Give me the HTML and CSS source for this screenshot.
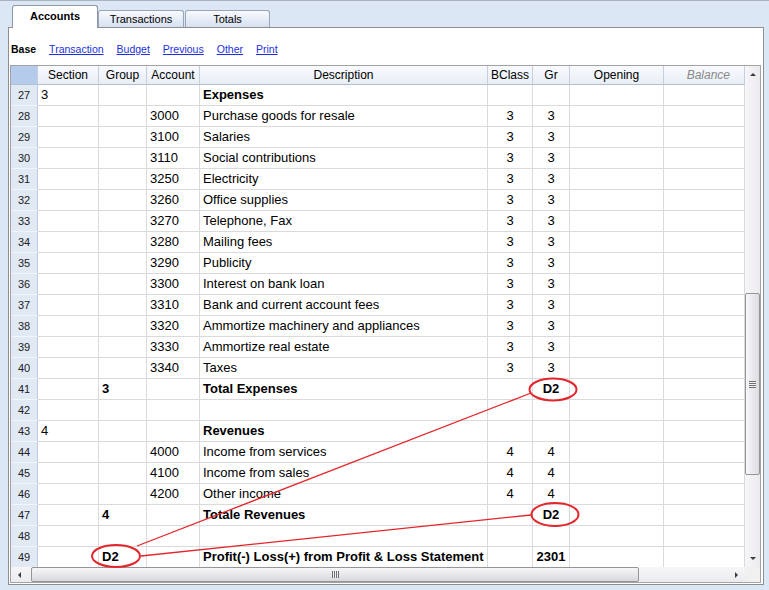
FILE: index.html
```html
<!DOCTYPE html>
<html lang="en">
<head>
    <meta charset="UTF-8">
    <title>Accounts</title>
    <link rel="stylesheet" href="styles.css">
</head>
<body>
    <div class="tabs">
        <div class="tab active">Accounts</div>
        <div class="tab">Transactions</div>
        <div class="tab tab-last">Totals</div>
    </div>
    <div class="panel">
        <div class="views">
            <b>Base</b>
            <a href="#">Transaction</a>
            <a href="#">Budget</a>
            <a href="#">Previous</a>
            <a href="#">Other</a>
            <a href="#">Print</a>
        </div>
        <div class="grid">
            <div class="grid-main">
                <div class="sheet">
                    <div class="row head">
                        <span class="corner"></span><span>Section</span><span>Group</span><span>Account</span><span>Description</span><span>BClass</span><span>Gr</span><span>Opening</span><span class="bal">Balance</span>
                    </div>
                    <div class="row"><span class="num">27</span><span>3</span><span></span><span></span><span class="b">Expenses</span><span></span><span></span><span></span><span></span></div>
                    <div class="row"><span class="num">28</span><span></span><span></span><span>3000</span><span>Purchase goods for resale</span><span class="c">3</span><span class="c">3</span><span></span><span></span></div>
                    <div class="row"><span class="num">29</span><span></span><span></span><span>3100</span><span>Salaries</span><span class="c">3</span><span class="c">3</span><span></span><span></span></div>
                    <div class="row"><span class="num">30</span><span></span><span></span><span>3110</span><span>Social contributions</span><span class="c">3</span><span class="c">3</span><span></span><span></span></div>
                    <div class="row"><span class="num">31</span><span></span><span></span><span>3250</span><span>Electricity</span><span class="c">3</span><span class="c">3</span><span></span><span></span></div>
                    <div class="row"><span class="num">32</span><span></span><span></span><span>3260</span><span>Office supplies</span><span class="c">3</span><span class="c">3</span><span></span><span></span></div>
                    <div class="row"><span class="num">33</span><span></span><span></span><span>3270</span><span>Telephone, Fax</span><span class="c">3</span><span class="c">3</span><span></span><span></span></div>
                    <div class="row"><span class="num">34</span><span></span><span></span><span>3280</span><span>Mailing fees</span><span class="c">3</span><span class="c">3</span><span></span><span></span></div>
                    <div class="row"><span class="num">35</span><span></span><span></span><span>3290</span><span>Publicity</span><span class="c">3</span><span class="c">3</span><span></span><span></span></div>
                    <div class="row"><span class="num">36</span><span></span><span></span><span>3300</span><span>Interest on bank loan</span><span class="c">3</span><span class="c">3</span><span></span><span></span></div>
                    <div class="row"><span class="num">37</span><span></span><span></span><span>3310</span><span>Bank and current account fees</span><span class="c">3</span><span class="c">3</span><span></span><span></span></div>
                    <div class="row"><span class="num">38</span><span></span><span></span><span>3320</span><span>Ammortize machinery and appliances</span><span class="c">3</span><span class="c">3</span><span></span><span></span></div>
                    <div class="row"><span class="num">39</span><span></span><span></span><span>3330</span><span>Ammortize real estate</span><span class="c">3</span><span class="c">3</span><span></span><span></span></div>
                    <div class="row"><span class="num">40</span><span></span><span></span><span>3340</span><span>Taxes</span><span class="c">3</span><span class="c">3</span><span></span><span></span></div>
                    <div class="row"><span class="num">41</span><span></span><span class="b">3</span><span></span><span class="b">Total Expenses</span><span></span><span class="c b">D2</span><span></span><span></span></div>
                    <div class="row"><span class="num">42</span><span></span><span></span><span></span><span></span><span></span><span></span><span></span><span></span></div>
                    <div class="row"><span class="num">43</span><span>4</span><span></span><span></span><span class="b">Revenues</span><span></span><span></span><span></span><span></span></div>
                    <div class="row"><span class="num">44</span><span></span><span></span><span>4000</span><span>Income from services</span><span class="c">4</span><span class="c">4</span><span></span><span></span></div>
                    <div class="row"><span class="num">45</span><span></span><span></span><span>4100</span><span>Income from sales</span><span class="c">4</span><span class="c">4</span><span></span><span></span></div>
                    <div class="row"><span class="num">46</span><span></span><span></span><span>4200</span><span>Other income</span><span class="c">4</span><span class="c">4</span><span></span><span></span></div>
                    <div class="row"><span class="num">47</span><span></span><span class="b">4</span><span></span><span class="b">Totale Revenues</span><span></span><span class="c b">D2</span><span></span><span></span></div>
                    <div class="row"><span class="num">48</span><span></span><span></span><span></span><span></span><span></span><span></span><span></span><span></span></div>
                    <div class="row"><span class="num">49</span><span></span><span class="b">D2</span><span></span><span class="b">Profit(-) Loss(+) from Profit &amp; Loss Statement</span><span></span><span class="c b">2301</span><span></span><span></span></div>
                </div>
                <div class="vscroll">
                    <div class="btn"><i class="arrow up"></i></div>
                    <div class="vthumb"><i class="grip-h"></i></div>
                    <div class="btn btn-end"><i class="arrow down"></i></div>
                </div>
            </div>
            <div class="hscroll">
                <div class="btn"><i class="arrow left"></i></div>
                <div class="hthumb"><i class="grip-v"></i></div>
                <div class="btn btn-end"><i class="arrow right"></i></div>
                <div class="corner-box"></div>
            </div>
        </div>
    </div>

    <!-- red annotations drawn over the grid -->
    <svg class="marks" width="769" height="590" viewBox="0 0 769 590">
        <g fill="none" stroke="#e3262b">
            <line x1="137" y1="546" x2="531" y2="393" stroke-width="1.3"/>
            <line x1="141" y1="556" x2="531" y2="515" stroke-width="1.3"/>
            <ellipse cx="553" cy="389.5" rx="23.5" ry="11" stroke-width="2"/>
            <ellipse cx="555" cy="514.5" rx="23.5" ry="11.5" stroke-width="2"/>
            <ellipse cx="116" cy="556" rx="24" ry="11" stroke-width="2"/>
        </g>
    </svg>
</body>
</html>
```

FILE: styles.css
```css
body {
    margin: 0;
    background: #dce7f5;
    font-family: "Liberation Sans", Arial, sans-serif;
    font-size: 13px;
    color: #000;
    border-top: 1px solid #a9b2be;
}
.tabs {
    display: flex;
    align-items: flex-end;
    height: 26px;
    padding-left: 12px;
}
.tab {
    box-sizing: border-box;
    width: 86px;
    height: 17px;
    border: 1px solid #99a5b6;
    border-bottom: none;
    border-radius: 3px 3px 0 0;
    background: linear-gradient(#f8fafd, #d6e0f1);
    font-size: 11px;
    line-height: 17px;
    text-align: center;
}
.tab-last {
    width: 85px;
    margin-left: 1px;
}
.tab.active {
    position: relative;
    z-index: 1;
    height: 23px;
    margin-bottom: -1px;
    background: #fff;
    border-color: #8d98a8;
    font-weight: bold;
    line-height: 21px;
}
.panel {
    box-sizing: border-box;
    margin-left: 8px;
    width: 756px;
    height: 558px;
    border: 1px solid #8f8f8f;
    background: #fff;
    padding: 0 2px 1px 1px;
}
.views {
    box-sizing: border-box;
    display: flex;
    gap: 13px;
    height: 37px;
    padding: 14px 0 0 1px;
    font-size: 10.5px;
    line-height: 14px;
}
.views a {
    color: #1d2fe0;
}
.grid {
    border: 1px solid #a3a3a3;
    height: 516px;
}
.grid-main {
    display: flex;
    height: 501px;
}
.sheet {
    width: 734px;
    overflow: hidden;
}
.row {
    display: grid;
    grid-template-columns: 27px 61px 48px 53px 288px 45px 37px 94px 81px;
    height: 21px;
}
.row span {
    box-sizing: border-box;
    border-right: 1px solid #dadada;
    border-bottom: 1px solid #dadada;
    padding: 0 3px;
    line-height: 20px;
    white-space: nowrap;
    overflow: hidden;
}
.row .num {
    padding: 0;
    background: #e1e9f5;
    border-right-color: #bccbe0;
    border-bottom-color: #f2f5fa;
    font-size: 11px;
    color: #222;
    text-align: center;
}
.row .c {
    text-align: center;
}
.row .b {
    font-weight: bold;
}
.row.head {
    height: 19px;
}
.row.head span {
    background: linear-gradient(#f8fafd, #e9eef6);
    border-right-color: #c5cfdd;
    border-bottom-color: #b3c0d2;
    font-size: 12px;
    line-height: 18px;
    text-align: center;
}
.row.head .corner {
    background: #b4cbeb;
}
.row.head .bal {
    text-align: right;
    padding-right: 14px;
    color: #8a8a8a;
    font-style: italic;
}
.vscroll {
    width: 15px;
    display: flex;
    flex-direction: column;
    align-items: center;
    background: linear-gradient(90deg, #f6f5f8, #eceaef);
}
.btn {
    width: 15px;
    height: 17px;
    display: flex;
    align-items: center;
    justify-content: center;
    flex-shrink: 0;
}
.btn-end {
    margin-top: auto;
}
.arrow {
    width: 0;
    height: 0;
    border: 3px solid transparent;
}
.arrow.up {
    border-bottom: 3px solid #3a3a3a;
    border-top-width: 0;
}
.arrow.down {
    border-top: 3px solid #3a3a3a;
    border-bottom-width: 0;
}
.arrow.left {
    border-right: 3px solid #3a3a3a;
    border-left-width: 0;
}
.arrow.right {
    border-left: 3px solid #3a3a3a;
    border-right-width: 0;
}
.vthumb {
    box-sizing: border-box;
    width: 15px;
    height: 182px;
    margin-top: 210px;
    border: 1px solid #959595;
    border-radius: 2px;
    background: linear-gradient(90deg, #f7f6f9, #dcdce2);
    display: flex;
    align-items: center;
    justify-content: center;
}
.grip-h {
    width: 7px;
    height: 7px;
    background: repeating-linear-gradient(#6e6e6e 0 1px, #f2f2f2 1px 2px);
}
.hscroll {
    display: flex;
    align-items: center;
    height: 15px;
    background: linear-gradient(#f6f5f8, #eceaef);
}
.hscroll .btn {
    width: 17px;
    height: 15px;
}
.hthumb {
    box-sizing: border-box;
    width: 608px;
    height: 15px;
    margin-left: 3px;
    border: 1px solid #959595;
    border-radius: 2px;
    background: linear-gradient(#f7f6f9, #d8d8de);
    display: flex;
    align-items: center;
    justify-content: center;
}
.grip-v {
    width: 7px;
    height: 7px;
    background: repeating-linear-gradient(90deg, #6e6e6e 0 1px, #f2f2f2 1px 2px);
}
.hscroll .btn-end {
    margin-left: auto;
}
.corner-box {
    width: 15px;
    height: 15px;
    background: #f0f0f0;
}
.marks {
    position: absolute;
    left: 0;
    top: 0;
    pointer-events: none;
}
```
